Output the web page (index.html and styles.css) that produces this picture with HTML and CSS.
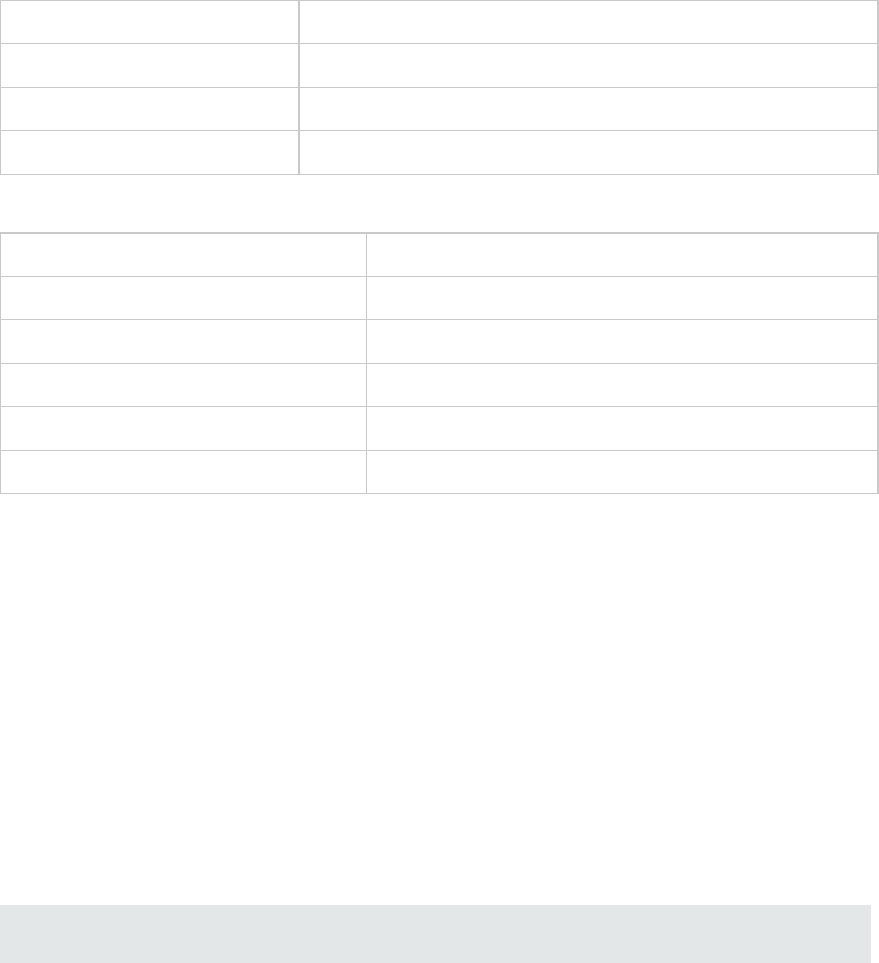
FILE: index.html
```html
<!DOCTYPE html>
<html lang="en">
<head>
  <meta charset="UTF-8" />
  <meta name="viewport" content="width=device-width, initial-scale=1" />
  <title>Details</title>
  <link rel="stylesheet" href="styles.css">
</head>
<body>
  <table class="grid grid-summary">
    <tr><td></td><td></td></tr>
    <tr><td></td><td></td></tr>
    <tr><td></td><td></td></tr>
    <tr><td></td><td></td></tr>
  </table>

  <table class="grid grid-details">
    <tr><td></td><td></td></tr>
    <tr><td></td><td></td></tr>
    <tr><td></td><td></td></tr>
    <tr><td></td><td></td></tr>
    <tr><td></td><td></td></tr>
    <tr><td></td><td></td></tr>
  </table>

  <footer class="page-footer"></footer>
</body>
</html>
```

FILE: styles.css
```css
body {
  margin: 0;
  font-family: "Liberation Sans", Arial, sans-serif;
  font-size: 14px;
  color: #333;
  background: #fff;
}

.grid {
  width: 879px;
  border-collapse: collapse;
  table-layout: fixed;
  border: 1px solid #c9c9c9;
  border-right-width: 2px;
}
.grid td {
  height: 42.4px;
  padding: 0 10px;
  border: 1px solid #c9c9c9;
}
.grid td:last-child {
  border-right: 2px solid #c9c9c9;
}

.grid-summary {
  margin-bottom: 57px;
}
.grid-summary td:first-child {
  width: 277px;
  border-right: 2px solid #c9c9c9;
}

.grid-details {
  border-top-width: 2px;
}
.grid-details tr:first-child td {
  border-top: 2px solid #c9c9c9;
}
.grid-details td:first-child {
  width: 345px;
}

/* bottom bar */
.page-footer {
  width: 871px;
  height: 60px;
  margin-top: 411px;
  background: #e3e7e8;
}
```
